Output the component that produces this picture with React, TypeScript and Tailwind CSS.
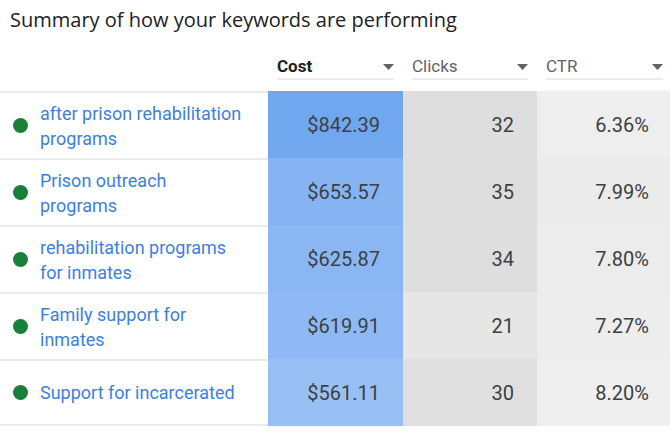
const rows = [
  { kw: "after prison rehabilitation programs", cost: "$842.39", clicks: "32", ctr: "6.36%", costBg: "bg-[#70a7ef]", clicksBg: "bg-[#dedede]", ctrBg: "bg-[#eeeeee]" },
  { kw: "Prison outreach programs", cost: "$653.57", clicks: "35", ctr: "7.99%", costBg: "bg-[#86b4f2]", clicksBg: "bg-[#dddddd]", ctrBg: "bg-[#ebebeb]" },
  { kw: "rehabilitation programs for inmates", cost: "$625.87", clicks: "34", ctr: "7.80%", costBg: "bg-[#8ab7f3]", clicksBg: "bg-[#dedede]", ctrBg: "bg-[#ececec]" },
  { kw: "Family support for inmates", cost: "$619.91", clicks: "21", ctr: "7.27%", costBg: "bg-[#8fb9f4]", clicksBg: "bg-[#e6e6e6]", ctrBg: "bg-[#ededed]" },
  { kw: "Support for incarcerated", cost: "$561.11", clicks: "30", ctr: "8.20%", costBg: "bg-[#99c0f5]", clicksBg: "bg-[#dfdfdf]", ctrBg: "bg-[#efefef]" },
];

function Arrow() {
  return (
    <svg width="11" height="6" viewBox="0 0 11 6" className="shrink-0">
      <polygon points="0,0 11,0 5.5,6" fill="#5f6368" />
    </svg>
  );
}

function HeaderCell({ label, bold, last }: { label: string; bold?: boolean; last?: boolean }) {
  return (
    <div className={last ? "pl-[9px] pr-[7px]" : "px-[9px]"}>
      <div className="flex items-center justify-between h-[25px] border-b-2 border-[#ebebeb]">
        <span
          className={
            bold
              ? "text-[17px] font-bold text-[#202124]"
              : "text-[17px] text-[#5f6368]"
          }
        >
          {label}
        </span>
        <Arrow />
      </div>
    </div>
  );
}

export default function App() {
  return (
    <div className="w-[670px] h-[442px] bg-white overflow-hidden font-['Roboto',sans-serif]">
      <h1 className="pl-[10px] pt-[8px] text-[20px] leading-[24px] text-[#202124] font-['Open_Sans',sans-serif]">
        Summary of how your keywords are performing
      </h1>

      <div className="grid grid-cols-[268px_135px_134px_133px] mt-[23px]">
        <div />
        <HeaderCell label="Cost" bold />
        <HeaderCell label="Clicks" />
        <HeaderCell label="CTR" last />
      </div>

      <div className="grid grid-cols-[268px_135px_134px_133px] mt-[11px]">
        {rows.map((r, i) => (
          <div key={r.kw} className="contents">
            <div
              className={
                "flex items-center h-[67px] pl-[13px] border-t-2 border-[#ebebeb]" +
                (i === rows.length - 1 ? " border-b-2" : "")
              }
            >
              <span className="w-[15px] h-[15px] rounded-full bg-[#188038] shrink-0" />
              <span className="ml-[12px] w-[205px] text-[18px] leading-[25px] text-[#3d7fdd]">
                {r.kw}
              </span>
            </div>
            <div className={"flex items-center justify-end h-[67px] pr-[23px] text-[20px] text-[#3c4043] " + r.costBg}>
              {r.cost}
            </div>
            <div className={"flex items-center justify-end h-[67px] pr-[23px] text-[20px] text-[#3c4043] " + r.clicksBg}>
              {r.clicks}
            </div>
            <div className={"flex items-center justify-end h-[67px] pr-[21px] text-[20px] text-[#3c4043] " + r.ctrBg}>
              {r.ctr}
            </div>
          </div>
        ))}
      </div>
    </div>
  );
}
